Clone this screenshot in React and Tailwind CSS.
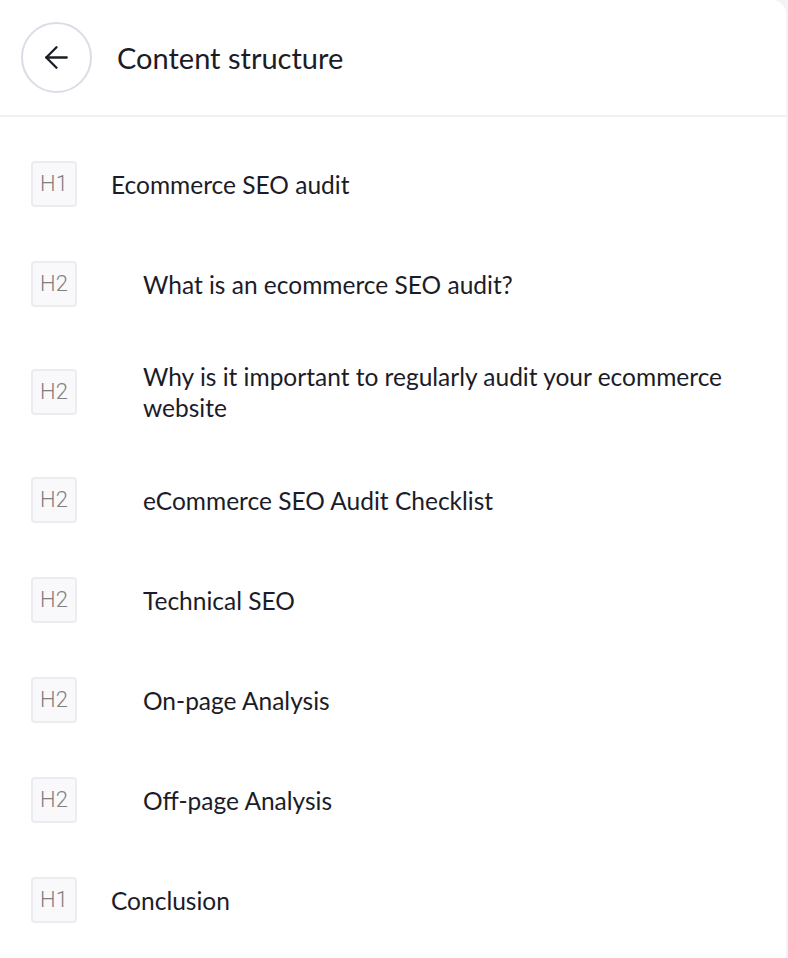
import { ArrowLeft } from 'lucide-react';

const items = [
  { level: 'H1', text: 'Ecommerce SEO audit' },
  { level: 'H2', text: 'What is an ecommerce SEO audit?' },
  { level: 'H2', text: 'Why is it important to regularly audit your ecommerce website' },
  { level: 'H2', text: 'eCommerce SEO Audit Checklist' },
  { level: 'H2', text: 'Technical SEO' },
  { level: 'H2', text: 'On-page Analysis' },
  { level: 'H2', text: 'Off-page Analysis' },
  { level: 'H1', text: 'Conclusion' },
];

const App = () => {
  return (
    <div className="min-h-screen bg-[#f3f3f7]" style={{ fontFamily: 'Lato, "Noto Sans", sans-serif' }}>
      <div className="w-[786px] min-h-[958px] bg-white rounded-tr-[14px]">
        {/* Header */}
        <div className="h-[117px] flex items-center gap-[25px] px-[21px] border-b-2 border-[#f1f1f5]">
          <button className="w-[71px] h-[71px] rounded-full border-2 border-[#dcdce6] flex items-center justify-center text-[#1c1c28]">
            <ArrowLeft className="w-[35px] h-[35px]" strokeWidth={1.6} />
          </button>
          <h1 className="text-[29px] text-[#1c1c28] leading-none">Content structure</h1>
        </div>

        {/* Outline */}
        <div className="pt-[17px] px-[31px]">
          {items.map((item, i) => (
            <div key={i} className="flex items-center py-[27px]">
              <div className="w-[46px] h-[46px] shrink-0 flex items-center justify-center bg-[#f9f9fb] border-2 border-[#ececf0] rounded-[4px] font-['Roboto',sans-serif] font-light text-[22px] leading-none text-[#7f7f7f]">
                {item.level}
              </div>
              <div
                className={`text-[24.5px] leading-[31px] text-[#1c1c28] pr-[30px] ${
                  item.level === 'H1' ? 'pl-[34px]' : 'pl-[66px]'
                }`}
              >
                {item.text}
              </div>
            </div>
          ))}
        </div>
      </div>
    </div>
  );
};

export default App;
